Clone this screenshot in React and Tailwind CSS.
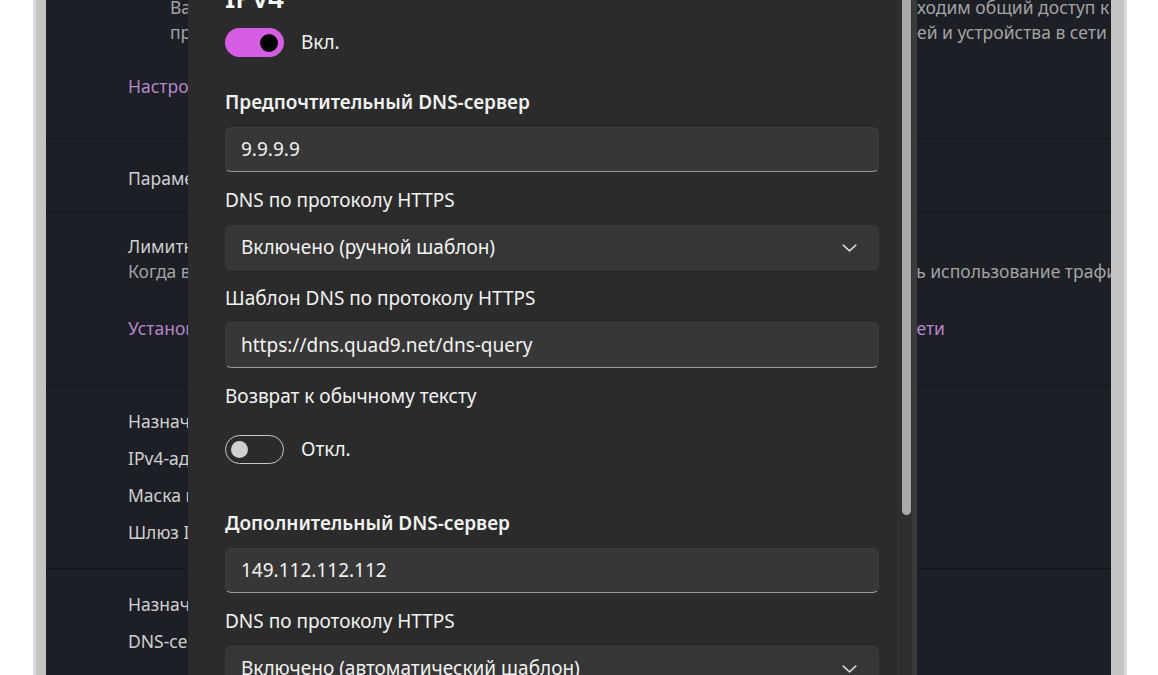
const Chevron = () => (
  <svg width="15" height="8" viewBox="0 0 15 8" fill="none">
    <polyline points="1.2,1.2 7.5,6.8 13.8,1.2" stroke="#d6d6d6" strokeWidth="1.6" strokeLinecap="round" strokeLinejoin="round" />
  </svg>
);

const Toggle = ({ on, label }) => (
  <div className="flex items-center h-[29px]">
    {on ? (
      <div className="w-[59px] h-[29px] rounded-full bg-[#d55de3] flex items-center justify-end pr-[6px]">
        <div className="w-[18px] h-[18px] rounded-full bg-black" />
      </div>
    ) : (
      <div className="w-[59px] h-[29px] rounded-full border-[1.5px] border-[#c9c9c9] flex items-center pl-[5px]">
        <div className="w-[17px] h-[17px] rounded-full bg-[#d0d0d0]" />
      </div>
    )}
    <span className="ml-[17px] text-[19px] text-[#f2f2f2]">{label}</span>
  </div>
);

const TextBox = ({ value, className }) => (
  <div className={`shrink-0 h-[45px] rounded-[6px] bg-[#373737] border border-[#3d3d3d] border-b-[#9a9a9a] flex items-center pl-[15px] text-[19px] text-[#f2f2f2] ${className}`}>
    {value}
  </div>
);

const Select = ({ value, className }) => (
  <div className={`shrink-0 h-[45px] rounded-[6px] bg-[#363636] border border-[#3b3b3b] flex items-center justify-between pl-[15px] pr-[21px] text-[19px] text-[#f2f2f2] ${className}`}>
    <span>{value}</span>
    <Chevron />
  </div>
);

const Label = ({ children, bold, className }) => (
  <div className={`shrink-0 leading-[28px] text-[19px] text-[#f2f2f2] ${bold ? "font-semibold" : ""} ${className}`}>
    {children}
  </div>
);

const Divider = () => <div className="h-px bg-[#121419]" />;

export default function App() {
  return (
    <div className="w-[1158px] h-[675px] overflow-hidden bg-white font-['Noto_Sans',sans-serif]">
      <div className="ml-[33px] h-full w-[1094px] flex bg-[#c3c3c3] border-l-[3px] border-r-[3px] border-[#dadada] pl-[10px] pr-[13px]">
        <div className="relative flex-1 bg-[#1c1f26] overflow-hidden text-[17.5px] whitespace-nowrap">
          {/* settings page behind the dialog */}
          <div className="h-[143px] pl-[82px]">
            <div className="pl-[42px] -mt-[5px] leading-[25px] text-[#a3a3a3]">
              <div className="flex">
                <span className="shrink-0 w-[747px] overflow-hidden">Ваше устройство доступно для других компьютеров в этой сети. Если вам не нужен или не необ</span>
                <span className="shrink-0">ходим общий доступ к файлам</span>
              </div>
              <div className="flex">
                <span className="shrink-0 w-[747px] overflow-hidden">принтерам, используйте этот параметр, чтобы найти другие компьютеры, устройства и пол</span>
                <span className="shrink-0">ей и устройства в сети и для общего</span>
              </div>
            </div>
            <div className="mt-[27px] leading-[28px] text-[#b884c8]">Настроить параметры брандмауэра и безопасности</div>
          </div>
          <Divider />
          <div className="h-[73px] pl-[82px] pt-[25px] leading-[28px] text-[#cfcfcf]">Параметры Wi-Fi</div>
          <Divider />
          <div className="h-[172px] pl-[82px] pt-[21px]">
            <div className="leading-[25px] text-[#cfcfcf]">Лимитное подключение</div>
            <div className="flex leading-[25px] text-[#a3a3a3]">
              <span className="shrink-0 w-[780px] overflow-hidden">Когда вы подключены к этой сети, некоторые приложения могут работать иначе, чтобы сократи</span>
              <span className="shrink-0">ть использование трафика</span>
            </div>
            <div className="flex mt-[30px] leading-[28px] text-[#b884c8]">
              <span className="shrink-0 w-[780px] overflow-hidden">Установить лимит трафика, чтобы контролировать использование данных в этой </span>
              <span className="shrink-0">сети</span>
            </div>
          </div>
          <Divider />
          <div className="h-[182px] pl-[82px] pt-[17px] leading-[37px] text-[#cfcfcf]">
            <div>Назначение IP:</div>
            <div>IPv4-адрес:</div>
            <div>Маска подсети IPv4:</div>
            <div>Шлюз IPv4:</div>
          </div>
          <Divider />
          <div className="pl-[82px] pt-[17px] leading-[37px] text-[#cfcfcf]">
            <div>Назначение DNS-сервера:</div>
            <div>DNS-серверы IPv4:</div>
          </div>

          {/* dialog */}
          <div className="absolute left-[142px] top-0 h-full w-[729px] flex bg-[#2b2b2b] border-r-[5px] border-[#3a3a3a] whitespace-normal">
            <div className="w-[709px] pl-[37px] pr-[18px] flex flex-col">
              <div className="shrink-0 -mt-[21px] h-[36px] leading-[36px] text-[28px] font-semibold text-white">IPv4</div>
              <div className="shrink-0 mt-[13px]">
                <Toggle on label="Вкл." />
              </div>
              <Label bold className="mt-[31px]">Предпочтительный DNS-сервер</Label>
              <TextBox value="9.9.9.9" className="mt-[11px]" />
              <Label className="mt-[14px]">DNS по протоколу HTTPS</Label>
              <Select value="Включено (ручной шаблон)" className="mt-[11px]" />
              <Label className="mt-[14px]">Шаблон DNS по протоколу HTTPS</Label>
              <TextBox value="https://dns.quad9.net/dns-query" className="mt-[10px] h-[46px]" />
              <Label className="mt-[14px]">Возврат к обычному тексту</Label>
              <div className="shrink-0 mt-[25px]">
                <Toggle label="Откл." />
              </div>
              <Label bold className="mt-[45px]">Дополнительный DNS-сервер</Label>
              <TextBox value="149.112.112.112" className="mt-[11px]" />
              <Label className="mt-[14px]">DNS по протоколу HTTPS</Label>
              <Select value="Включено (автоматический шаблон)" className="mt-[11px]" />
            </div>
            <div className="w-[15px] bg-[#2f2f2f] pl-[5px]">
              <div className="w-[9px] h-[515px] rounded-b-full bg-[#a9a9a9]" />
            </div>
          </div>
        </div>
      </div>
    </div>
  );
}
